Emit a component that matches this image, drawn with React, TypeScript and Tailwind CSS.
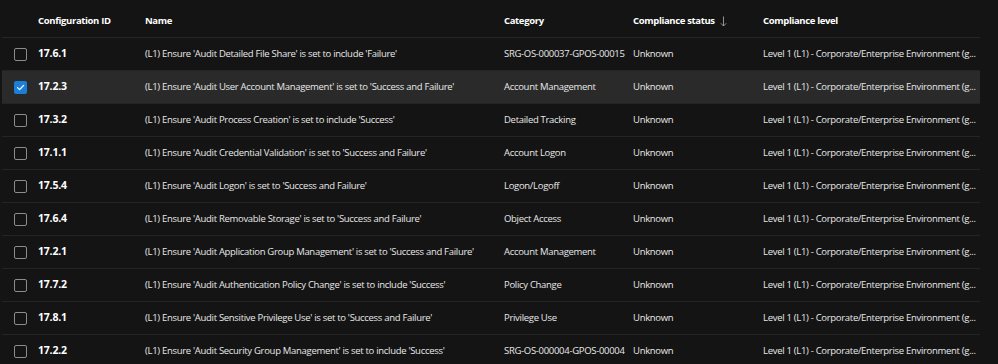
import React from "react";

const rows = [
  ["17.6.1", "(L1) Ensure 'Audit Detailed File Share' is set to include 'Failure'", "SRG-OS-000037-GPOS-00015"],
  ["17.2.3", "(L1) Ensure 'Audit User Account Management' is set to 'Success and Failure'", "Account Management"],
  ["17.3.2", "(L1) Ensure 'Audit Process Creation' is set to include 'Success'", "Detailed Tracking"],
  ["17.1.1", "(L1) Ensure 'Audit Credential Validation' is set to 'Success and Failure'", "Account Logon"],
  ["17.5.4", "(L1) Ensure 'Audit Logon' is set to 'Success and Failure'", "Logon/Logoff"],
  ["17.6.4", "(L1) Ensure 'Audit Removable Storage' is set to 'Success and Failure'", "Object Access"],
  ["17.2.1", "(L1) Ensure 'Audit Application Group Management' is set to 'Success and Failure'", "Account Management"],
  ["17.7.2", "(L1) Ensure 'Audit Authentication Policy Change' is set to include 'Success'", "Policy Change"],
  ["17.8.1", "(L1) Ensure 'Audit Sensitive Privilege Use' is set to 'Success and Failure'", "Privilege Use"],
  ["17.2.2", "(L1) Ensure 'Audit Security Group Management' is set to include 'Success'", "SRG-OS-000004-GPOS-00004"],
];

const cols = "grid grid-cols-[36px_107px_359px_129px_130px_217px] items-center";

const Checkbox = ({ checked }: { checked: boolean }) =>
  checked ? (
    <div className="w-[13px] h-[13px] rounded-[2px] bg-[#1a7fd8] flex items-center justify-center">
      <svg width="9" height="9" viewBox="0 0 9 9" fill="none">
        <path d="M1.5 4.6 L3.6 6.6 L7.6 2.4" stroke="white" strokeWidth="1.3" strokeLinecap="round" strokeLinejoin="round" />
      </svg>
    </div>
  ) : (
    <div className="w-[13px] h-[13px] rounded-[2px] border border-[#8c8c8c]" />
  );

export default function App() {
  return (
    <div className="w-[998px] h-[364px] overflow-hidden bg-[#141414] text-[#e8e8e8] font-['Open_Sans',sans-serif] text-[9.5px] tracking-[-0.3px]">
      <div className="w-[978px] ml-[2px]">
        <div className={`${cols} h-[38px] pt-[6px] border-b border-[#262626] font-bold text-white tracking-[-0.35px]`}>
          <div />
          <div>Configuration ID</div>
          <div>Name</div>
          <div>Category</div>
          <div className="flex items-center gap-[5px]">
            Compliance status
            <svg width="7" height="11" viewBox="0 0 7 11" fill="none">
              <path d="M3.5 0.5 V10 M0.8 7.3 L3.5 10 L6.2 7.3" stroke="#a0a0a0" strokeWidth="0.9" />
            </svg>
          </div>
          <div>Compliance level</div>
        </div>
        {rows.map(([id, name, cat], i) => (
          <div
            key={id}
            className={`${cols} h-[33px] border-b border-[#242424] ${i === 1 ? "bg-[#2a2a2a]" : ""}`}
          >
            <div className="pl-[12px]">
              <Checkbox checked={i === 1} />
            </div>
            <div className="font-bold text-white text-[10.5px] tracking-[-0.2px]">{id}</div>
            <div className="whitespace-nowrap">{name}</div>
            <div className="whitespace-nowrap">{cat}</div>
            <div>Unknown</div>
            <div className="whitespace-nowrap">Level 1 (L1) - Corporate/Enterprise Environment (g...</div>
          </div>
        ))}
      </div>
    </div>
  );
}
